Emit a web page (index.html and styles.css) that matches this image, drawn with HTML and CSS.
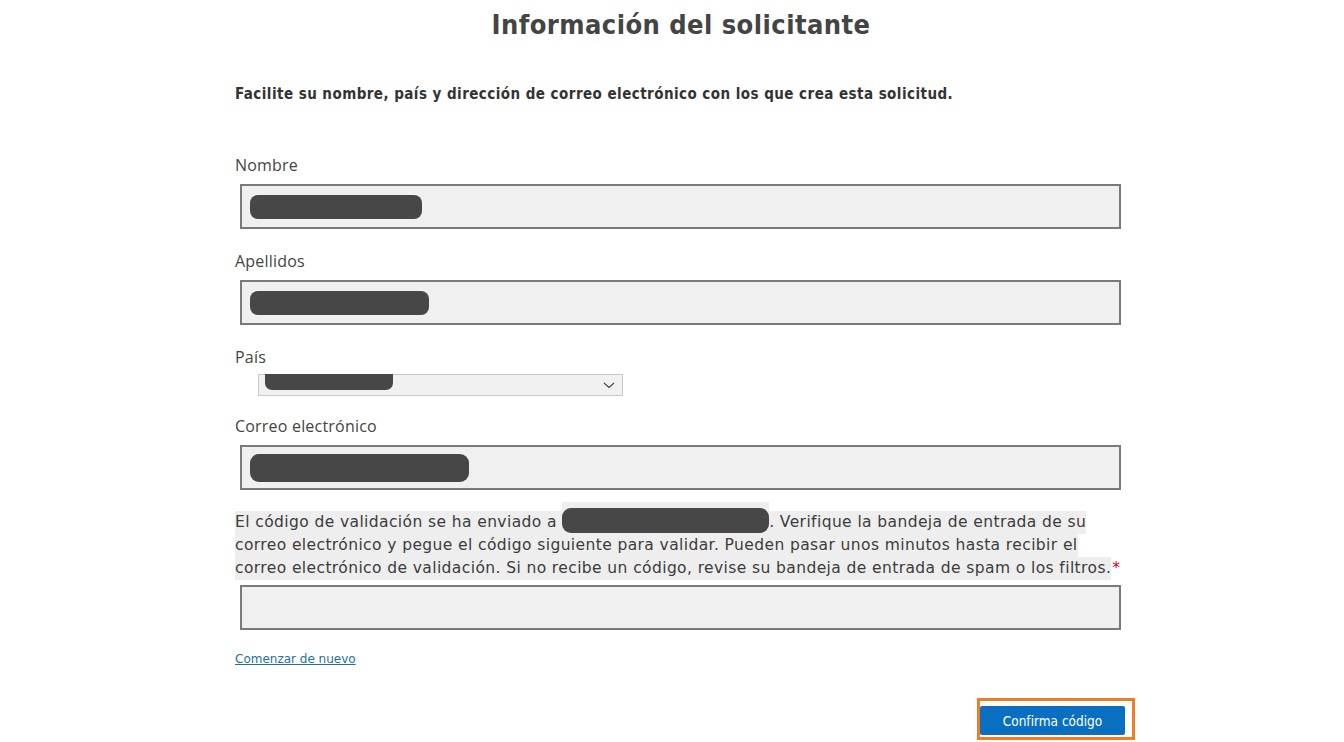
FILE: index.html
```html
<!DOCTYPE html>
<html lang="es">
<head>
<meta charset="utf-8">
<title>Información del solicitante</title>
<link rel="stylesheet" href="styles.css">
</head>
<body>
<main class="page">
  <h1 class="title">Información del solicitante</h1>
  <p class="intro">Facilite su nombre, país y dirección de correo electrónico con los que crea esta solicitud.</p>

  <div class="field">
    <label class="label">Nombre</label>
    <div class="input"><span class="redact r-nombre"></span></div>
  </div>

  <div class="field">
    <label class="label">Apellidos</label>
    <div class="input"><span class="redact r-apellidos"></span></div>
  </div>

  <div class="field field-select">
    <label class="label">País</label>
    <div class="select">
      <span class="redact r-pais"></span>
      <svg class="chev" width="12" height="7" viewBox="0 0 12 7"><path d="M1 1 L6 5.5 L11 1" fill="none" stroke="#444" stroke-width="1.1"/></svg>
    </div>
  </div>

  <div class="field">
    <label class="label">Correo electrónico</label>
    <div class="input"><span class="redact r-email"></span></div>
  </div>

  <p class="notice"><span class="hl">El código de validación se ha enviado a <span class="inline-redact"><span class="redact r-inline"></span></span>. Verifique la bandeja de entrada de su</span><br><span class="hl">correo electrónico y pegue el código siguiente para validar. Pueden pasar unos minutos hasta recibir el</span><br><span class="hl">correo electrónico de validación. Si no recibe un código, revise su bandeja de entrada de spam o los filtros.</span><span class="req">*</span></p>
  <div class="input code"></div>

  <a class="restart" href="#">Comenzar de nuevo</a>

  <div class="actions">
    <div class="highlight-frame">
      <button class="btn" type="button">Confirma código</button>
    </div>
  </div>
</main>
</body>
</html>
```

FILE: styles.css
```css
html, body {
  margin: 0;
  padding: 0;
  background: #ffffff;
}

body {
  font-family: "DejaVu Sans", Verdana, sans-serif;
  color: #444444;
}

.page {
  width: 886px;
  margin-left: 235px;
}

.title {
  margin: 9px 0 0 0;
  font-family: "DejaVu Sans Condensed", "DejaVu Sans", sans-serif;
  font-weight: bold;
  font-size: 27px;
  line-height: 32px;
  color: #444444;
  text-align: center;
  letter-spacing: 0.45px;
  padding-left: 6px;
}

.intro {
  margin: 45px 0 0 0;
  font-family: "DejaVu Sans Condensed", "DejaVu Sans", sans-serif;
  font-weight: bold;
  font-size: 15px;
  letter-spacing: 0.45px;
  line-height: 16px;
  color: #333333;
}

.field {
  margin-top: 52px;
}

.field + .field {
  margin-top: 21px;
}

.label {
  display: block;
  font-family: "Open Sans", sans-serif;
  font-size: 16px;
  letter-spacing: 0.2px;
  line-height: 22px;
  color: #444444;
  margin-bottom: 8px;
}

.input {
  margin-left: 5px;
  box-sizing: border-box;
  height: 45px;
  border: 2px solid #7a7a7a;
  background: #f0f0f0;
  display: flex;
  align-items: center;
  padding-left: 8px;
}

.redact {
  display: inline-block;
  background: #474747;
  border-radius: 8px;
}

.r-nombre { width: 172px; height: 24px; }
.r-apellidos { width: 179px; height: 24px; }
.r-email { width: 219px; height: 28px; border-radius: 9px; }

.field-select .label {
  margin-bottom: 6px;
}

.select {
  margin-left: 23px;
  width: 365px;
  height: 22px;
  box-sizing: border-box;
  border: 1px solid #c8c8c8;
  background: #f1f1f1;
  display: flex;
  align-items: flex-start;
  justify-content: space-between;
  padding: 0 7px 0 6px;
}

.r-pais {
  width: 128px;
  height: 16px;
  border-radius: 0 0 7px 7px;
  margin-top: -1px;
}

.chev {
  align-self: center;
}

.field-select + .field {
  margin-top: 19px;
}

.notice {
  margin: 21px 0 0 0;
  font-size: 15.5px;
  letter-spacing: 0.4px;
  line-height: 23px;
  color: #3c3c3c;
}

.hl {
  background: #eeeeee;
  padding: 2px 0 3px 0;
}

.inline-redact {
  display: inline-block;
  vertical-align: -6px;
  background: #eeeeee;
  padding-top: 6px;
  margin-top: -10px;
}

.r-inline {
  display: block;
  width: 207px;
  height: 25px;
  border-radius: 9px;
}

.req {
  color: #d0021b;
  margin-left: 1px;
}

.code {
  margin-top: 5px;
}

.restart {
  display: inline-block;
  margin-top: 21px;
  font-size: 12px;
  line-height: 16px;
  color: #1f6f9f;
  text-decoration: underline;
}

.actions {
  display: flex;
  justify-content: flex-end;
  margin-top: 31px;
  margin-right: -14px;
}

.highlight-frame {
  border: 3px solid #ef7d22;
  padding: 5px 7px 2px 0;
}

.btn {
  display: block;
  width: 145px;
  height: 29px;
  border: none;
  border-radius: 2px;
  background: #0b6fc1;
  color: #ffffff;
  font-family: "DejaVu Sans Condensed", "DejaVu Sans", sans-serif;
  font-size: 13.5px;
  padding: 0;
}
```
